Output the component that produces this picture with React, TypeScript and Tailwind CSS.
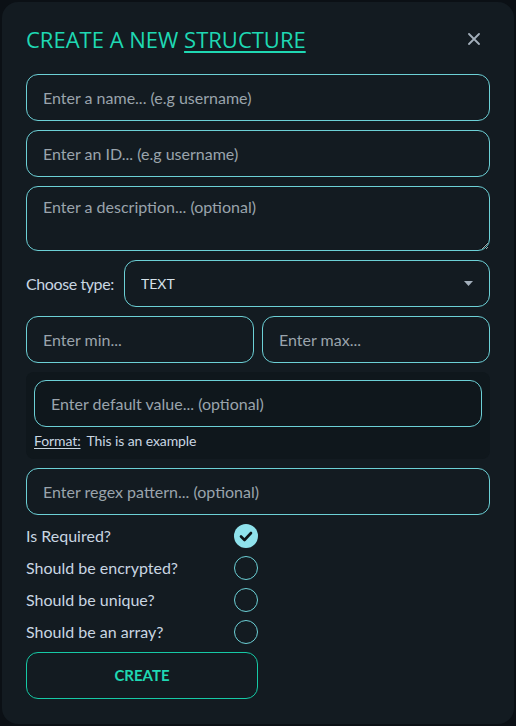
import { useState } from 'react';

const inputCls =
  'w-full h-[47px] rounded-xl border border-[#6cd0d6] bg-transparent px-4 text-[16px] text-[#d6e2ea] placeholder:text-[#9aa4ac] outline-none';

type Flag = { key: string; label: string };

const flags: Flag[] = [
  { key: 'required', label: 'Is Required?' },
  { key: 'encrypted', label: 'Should be encrypted?' },
  { key: 'unique', label: 'Should be unique?' },
  { key: 'array', label: 'Should be an array?' },
];

export default function App() {
  const [checked, setChecked] = useState<Record<string, boolean>>({ required: true });

  return (
    <div className="min-h-[726px] bg-[#0b1015] p-[2px]" style={{ fontFamily: 'Lato, "Noto Sans", sans-serif' }}>
      <div className="h-[722px] rounded-2xl bg-[#131b21] px-6 pt-[23px]">
        <div className="mb-[21px] flex items-center justify-between pr-[10px]">
          <h2
            className="text-[22px] leading-[28px] text-[#1fd8b3]"
            style={{ fontFamily: '"Open Sans", Lato, sans-serif' }}
          >
            CREATE A NEW <span className="underline underline-offset-[3px] decoration-[1.5px]">STRUCTURE</span>
          </h2>
          <button type="button" className="text-[#a3afbb]">
            <svg width="12" height="12" viewBox="0 0 12 12" stroke="currentColor" strokeWidth="1.8" strokeLinecap="round">
              <path d="M1 1L11 11M11 1L1 11" />
            </svg>
          </button>
        </div>

        <div className="flex flex-col gap-[9px]">
          <input className={inputCls} placeholder="Enter a name... (e.g username)" />
          <input className={inputCls} placeholder="Enter an ID... (e.g username)" />
          <textarea
            className="h-[65px] w-full resize-y rounded-xl border border-[#6cd0d6] bg-transparent px-4 py-[8px] text-[16px] text-[#d6e2ea] placeholder:text-[#9aa4ac] outline-none"
            placeholder="Enter a description... (optional)"
          />
          <div className="flex items-center justify-between">
            <span className="text-[16px] tracking-[-0.4px] text-[#c9d6e2] whitespace-nowrap">Choose type:</span>
            <div className="relative w-[366px]">
              <select className="h-[47px] w-full appearance-none rounded-xl border border-[#6cd0d6] bg-transparent px-4 text-[14px] text-[#d6e2ea] outline-none">
                <option className="bg-[#131b21]">TEXT</option>
                <option className="bg-[#131b21]">NUMBER</option>
                <option className="bg-[#131b21]">BOOLEAN</option>
              </select>
              <svg className="pointer-events-none absolute right-[17px] top-[21px]" width="9" height="5" viewBox="0 0 9 5" fill="#a3afbb">
                <path d="M0 0H9L4.5 5Z" />
              </svg>
            </div>
          </div>
          <div className="grid grid-cols-2 gap-2">
            <input className={inputCls} placeholder="Enter min..." />
            <input className={inputCls} placeholder="Enter max..." />
          </div>
          <div className="rounded-lg bg-[#0f171c] px-2 pt-2 pb-[8px]">
            <input className={inputCls} placeholder="Enter default value... (optional)" />
            <p className="mt-[4px] text-[14px] leading-[20px] tracking-[-0.1px] text-[#c9d6e2]">
              <span className="underline underline-offset-2">Format:</span>
              <span className="ml-[6px]">This is an example</span>
            </p>
          </div>
          <input className={inputCls} placeholder="Enter regex pattern... (optional)" />
        </div>

        <div className="mt-[5px] flex w-[232px] flex-col">
          {flags.map((f) => (
            <label key={f.key} className="flex h-8 cursor-pointer items-center justify-between">
              <span className="text-[16px] text-[#c9d6e2]">{f.label}</span>
              <button
                type="button"
                onClick={() => setChecked((c) => ({ ...c, [f.key]: !c[f.key] }))}
                className={
                  checked[f.key]
                    ? 'flex h-6 w-6 items-center justify-center rounded-full bg-[#8fe2ec]'
                    : 'h-6 w-6 rounded-full border-[1.5px] border-[#6cd0d6]'
                }
              >
                {checked[f.key] && (
                  <svg width="14" height="11" viewBox="0 0 14 11" fill="none" stroke="#0d1418" strokeWidth="2.6" strokeLinecap="round" strokeLinejoin="round">
                    <path d="M2 5.5L5.5 9L12 2" />
                  </svg>
                )}
              </button>
            </label>
          ))}
        </div>

        <div className="pt-[4px]">
          <button
            type="button"
            className="h-[47px] w-[232px] rounded-xl border-[1.5px] border-[#16c9a5] text-[15px] font-bold text-[#1fd8b3]"
          >
            CREATE
          </button>
        </div>
      </div>
    </div>
  );
}
